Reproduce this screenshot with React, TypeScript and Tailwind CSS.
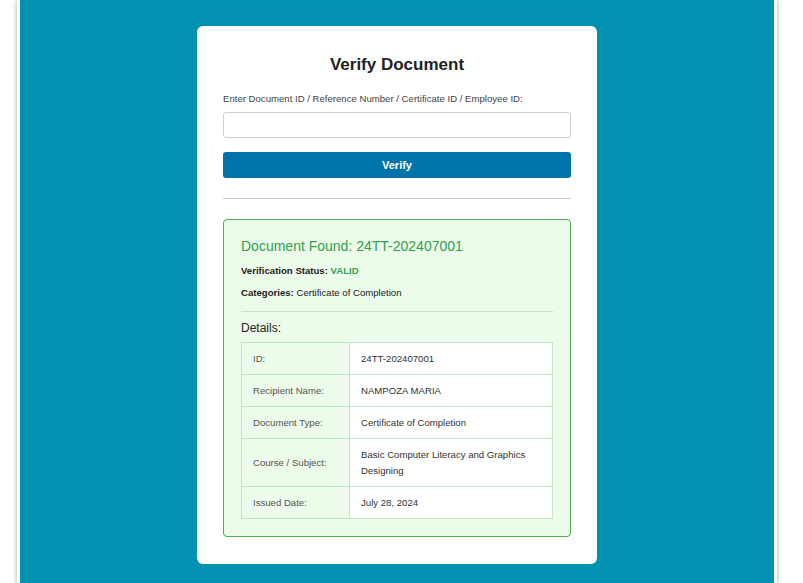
export default function App() {
  const rows: [string, string][] = [
    ["ID:", "24TT-202407001"],
    ["Recipient Name:", "NAMPOZA MARIA"],
    ["Document Type:", "Certificate of Completion"],
    ["Course / Subject:", "Basic Computer Literacy and Graphics Designing"],
    ["Issued Date:", "July 28, 2024"],
  ];

  return (
    <div className="min-h-[583px] bg-white font-['Liberation_Sans',Arial,sans-serif]">
      <div className="ml-[17px] w-[760px] min-h-[583px] border-x-[3px] border-white bg-[#0092b0] pt-[26px] pb-[20px] shadow-[0_0_5px_rgba(0,0,0,0.35)]">
        <div className="mx-auto w-[400px] rounded-[6px] bg-white px-[26px] pt-[27px] pb-[27px]">
          <h2 className="text-center text-[17px] leading-[24px] font-bold text-[#222]">Verify Document</h2>

          <label className="mt-[15px] block text-[9.6px] leading-[14px] text-[#444]">
            Enter Document ID / Reference Number / Certificate ID / Employee ID:
          </label>
          <input
            type="text"
            className="mt-[6px] block h-[26px] w-full rounded-[3px] border border-[#cfcfcf] bg-white px-2 text-[11px] outline-none"
          />
          <button className="mt-[14px] block h-[26px] w-full rounded-[3px] bg-[#0073aa] text-[11px] font-bold text-white">
            Verify
          </button>

          <hr className="mt-[20px] border-0 border-t border-[#cccccc]" />

          <div className="mt-[20px] rounded-[4px] border border-[#4caf50] bg-[#edfbea] px-[17px] pt-[17px] pb-[17px]">
            <h3 className="text-[14px] leading-[18px] font-normal text-[#2ea44f]">Document Found: 24TT-202407001</h3>
            <p className="mt-[9px] text-[9.6px] leading-[14px] text-[#222]">
              <span className="font-bold">Verification Status:</span>{" "}
              <span className="font-bold text-[#2ea44f]">VALID</span>
            </p>
            <p className="mt-[8px] text-[9.6px] leading-[14px] text-[#222]">
              <span className="font-bold">Categories:</span> Certificate of Completion
            </p>

            <hr className="mt-[11px] border-0 border-t border-[#c6e2c6]" />

            <p className="mt-[8px] text-[12px] leading-[16px] text-[#222]">Details:</p>

            <table className="mt-[6px] w-full border-collapse text-[9.6px] leading-[16px]">
              <tbody>
                {rows.map(([k, v]) => (
                  <tr key={k}>
                    <td className="w-[108px] border border-[#c3e6cb] bg-[#edfbea] px-[11px] py-[7.5px] align-middle text-[#555]">{k}</td>
                    <td className="border border-[#c3e6cb] bg-white px-[11px] py-[7.5px] align-middle text-[#333]">{v}</td>
                  </tr>
                ))}
              </tbody>
            </table>
          </div>
        </div>
      </div>
    </div>
  );
}
